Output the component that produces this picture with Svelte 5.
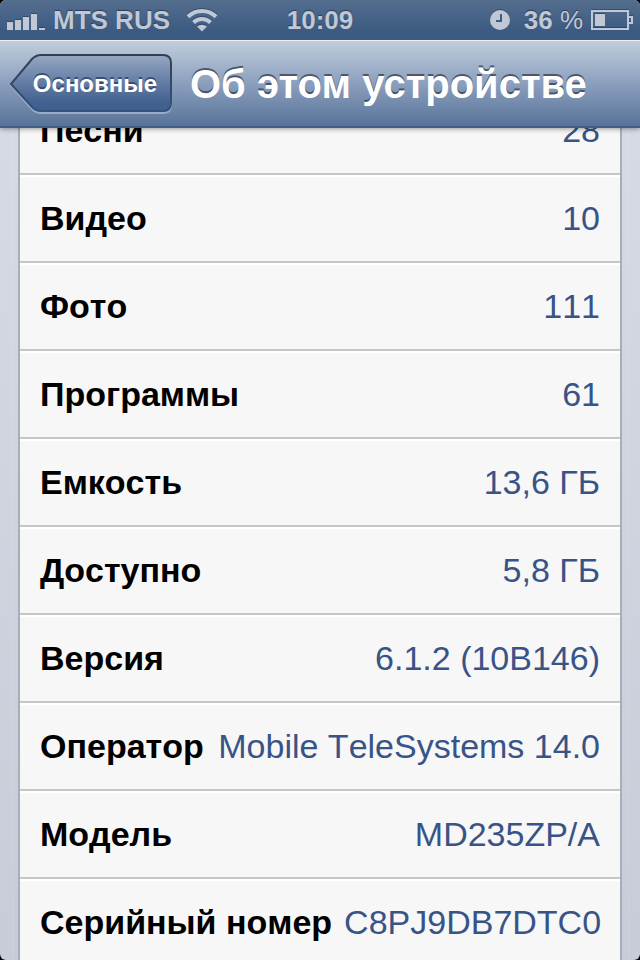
<script lang="ts">
  type InfoRow = { label: string; value: string };

  const carrier = 'MTS RUS';
  const time = '10:09';
  const battery = 36;

  const rows: InfoRow[] = [
    { label: 'Песни', value: '28' },
    { label: 'Видео', value: '10' },
    { label: 'Фото', value: '111' },
    { label: 'Программы', value: '61' },
    { label: 'Емкость', value: '13,6 ГБ' },
    { label: 'Доступно', value: '5,8 ГБ' },
    { label: 'Версия', value: '6.1.2 (10B146)' },
    { label: 'Оператор', value: 'Mobile TeleSystems 14.0' },
    { label: 'Модель', value: 'MD235ZP/A' },
    { label: 'Серийный номер', value: 'C8PJ9DB7DTC0' },
  ];
</script>

<div class="screen">
  <div class="device">
    <header class="top">
      <div class="status-bar">
        <div class="status-side">
          <svg class="signal" width="38" height="18" viewBox="0 0 38 18" aria-hidden="true">
            <path d="M0 9h6v8H0zM8 7h6v10H8zM16 4h6v13h-6zM24 1h6v16h-6zM32 15h6v2h-6z" />
          </svg>
          <span>{carrier}</span>
          <svg class="wifi" width="32" height="24" viewBox="0 0 32 24" aria-hidden="true">
            <path class="arc" d="M2 8.800A20 20 0 0 1 30 8.800" />
            <path class="arc" d="M7.500 14.500A12.200 12.200 0 0 1 24.500 14.500" />
            <path d="M16 23.500L11 18.600A7.500 7.500 0 0 1 21 18.600Z" />
          </svg>
        </div>
        <span class="time">{time}</span>
        <div class="status-side right">
          <svg class="clock" width="20" height="20" viewBox="0 0 20 20" aria-hidden="true">
            <circle cx="10" cy="10" r="10" />
            <path class="hands" d="M11 4v7H6" />
          </svg>
          <span>{battery} <span class="unit">%</span></span>
          <svg class="battery" width="42" height="20" viewBox="0 0 42 20" aria-hidden="true">
            <path class="case" d="M1 1h36v18H1zM37 7h4v6h-4" />
            <path d="M4 4h10v12H4z" />
          </svg>
        </div>
      </div>

      <nav class="nav-bar">
        <button class="back" type="button">
          <svg class="back-shape" viewBox="0 0 164 60" aria-hidden="true">
            <defs>
              <linearGradient id="back-fill" x1="0" y1="0" x2="0" y2="1">
                <stop offset="0" stop-color="#97a8c2" />
                <stop offset="0.500" stop-color="#627ca4" />
                <stop offset="0.850" stop-color="#42618f" />
                <stop offset="1" stop-color="#3f5f8f" />
              </linearGradient>
              <linearGradient id="back-edge" x1="0" y1="0" x2="0" y2="1">
                <stop offset="0" stop-color="#343f50" />
                <stop offset="1" stop-color="#36527d" />
              </linearGradient>
            </defs>
            <path
              class="glow"
              d="M1 31L22 6Q26 2 31 2H153Q161 2 161 10V51Q161 59 153 59H31Q26 59 22 55Z"
            />
            <path
              class="face"
              d="M1 30L22 5Q26 1 31 1H153Q161 1 161 9V49Q161 57 153 57H31Q26 57 22 53Z"
            />
          </svg>
          <span class="back-text">Основные</span>
        </button>
        <h1>Об этом устройстве</h1>
      </nav>
    </header>

    <main>
      <dl class="info">
        {#each rows as row}
          <div class="row">
            <dt>{row.label}</dt>
            <dd>{row.value}</dd>
          </div>
        {/each}
      </dl>
    </main>
  </div>
</div>

<style>
  :global(body) {
    margin: 0;
  }

  .screen {
    height: 100vh;
    background: #000;
    font-family: 'Liberation Sans', Arial, Helvetica, sans-serif;
  }

  .device {
    display: flex;
    flex-direction: column;
    height: 100%;
    overflow: hidden;
    border-radius: 6px;
    background:
      repeating-linear-gradient(90deg, transparent 0 12px, rgb(255 255 255 / 5%) 12px 14px),
      linear-gradient(#d8dce6, #c8ccd8);
  }

  .top {
    position: relative;
    z-index: 1;
    box-shadow: 0 1px 5px rgb(0 0 0 / 40%);
  }

  .status-bar {
    display: grid;
    grid-template-columns: 1fr auto 1fr;
    align-items: center;
    height: 40px;
    padding: 0 7px;
    box-sizing: border-box;
    background: linear-gradient(#546e8e, #3d5b82 75%);
    color: #bfc8d4;
    font-size: 26px;
    font-weight: bold;
    line-height: 40px;
    text-shadow: 0 -1px 1px rgb(20 35 60 / 60%);
    white-space: nowrap;
  }

  .status-side {
    display: flex;
    align-items: center;
    gap: 8px;
  }

  .right {
    justify-content: flex-end;
  }

  .status-bar svg {
    flex: none;
    fill: #bfc8d4;
    filter: drop-shadow(0 -1px 0 rgb(20 35 60 / 40%));
  }

  .signal {
    margin-top: 4px;
  }

  .wifi {
    margin-left: 8px;
  }

  .clock {
    margin-right: 6px;
  }

  .unit {
    font-weight: normal;
  }

  .status-bar .arc {
    fill: none;
    stroke: #bfc8d4;
    stroke-width: 4;
  }

  .status-bar .hands {
    fill: none;
    stroke: #3f5c82;
    stroke-width: 2;
  }

  .status-bar .case {
    fill: none;
    stroke: #bfc8d4;
    stroke-width: 2;
  }

  .nav-bar {
    display: flex;
    align-items: center;
    gap: 16px;
    height: 88px;
    padding: 0 10px;
    box-sizing: border-box;
    border-top: 1px solid #eef2f7;
    border-bottom: 2px solid #3f5d86;
    background: linear-gradient(#c1cddd, #8b9fbd 50%, #587399);
  }

  .back {
    position: relative;
    flex: none;
    width: 164px;
    height: 60px;
    padding: 0 0 0 6px;
    border: 0;
    background: none;
    color: #fff;
    font: bold 24px/60px 'Liberation Sans', Arial, Helvetica, sans-serif;
    text-shadow: 0 -2px 0 rgb(40 55 85 / 70%);
    cursor: pointer;
  }

  .back-shape {
    position: absolute;
    inset: 0;
    width: 100%;
    height: 100%;
  }

  .back-text {
    position: relative;
  }

  .face {
    fill: url(#back-fill);
    stroke: url(#back-edge);
    stroke-width: 2;
  }

  .glow {
    fill: none;
    stroke: rgb(200 214 234 / 50%);
    stroke-width: 2;
  }

  h1 {
    margin: 0;
    color: #fff;
    font-size: 40px;
    line-height: 48px;
    text-shadow: 0 -2px 0 rgb(50 60 80 / 75%);
    white-space: nowrap;
  }

  main {
    flex: 1;
    min-height: 0;
    padding: 0 18px;
    overflow: hidden;
  }

  /* The list is scrolled so that its first row is half under the bar */
  .info {
    margin: -41px 0 0;
    border: solid #a9adb8;
    border-width: 0 2px;
    background: #f7f7f7;
  }

  .row {
    display: flex;
    align-items: center;
    justify-content: space-between;
    gap: 12px;
    height: 88px;
    padding: 0 20px 2px;
    box-sizing: border-box;
    border-top: 2px solid #fff;
    border-bottom: 2px solid #c6c6c6;
    font-size: 34px;
    font-kerning: none;
    line-height: 40px;
    white-space: nowrap;
  }

  dt {
    color: #000;
    font-weight: bold;
  }

  dd {
    margin: 0;
    color: #385487;
  }
</style>
